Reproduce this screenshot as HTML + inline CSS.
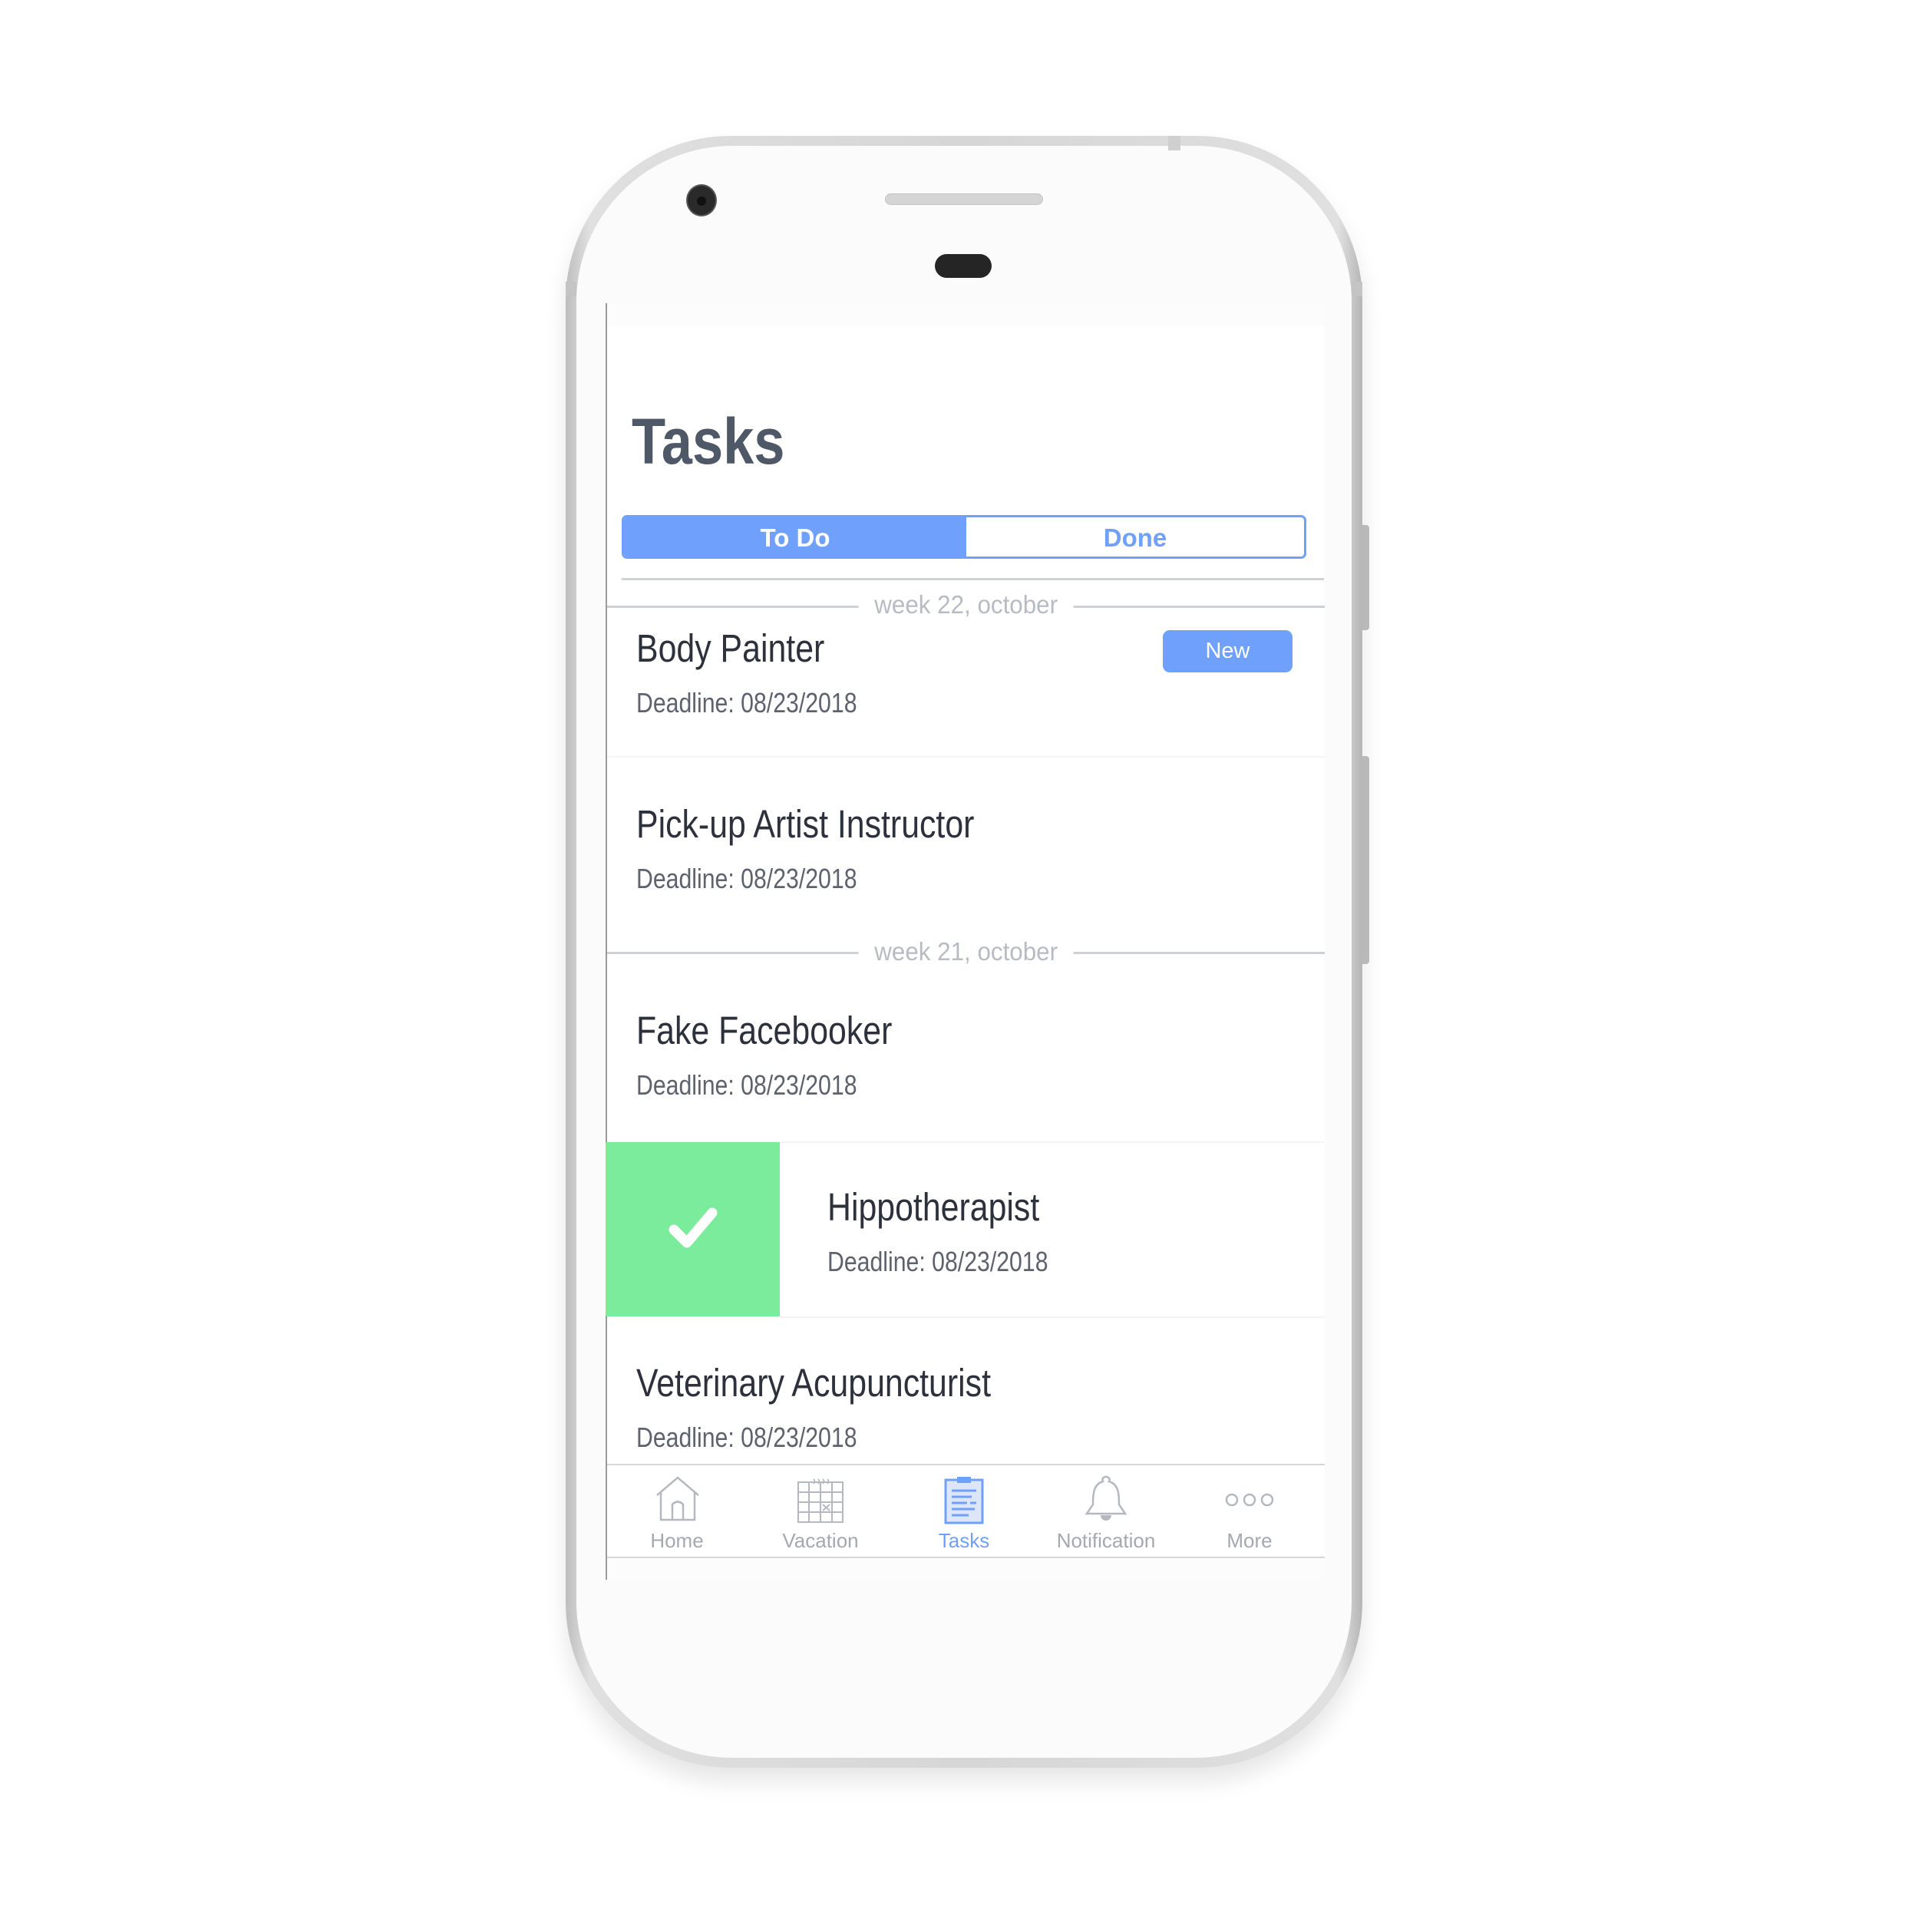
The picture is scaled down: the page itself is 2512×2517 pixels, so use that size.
<!DOCTYPE html>
<html><head><meta charset="utf-8">
<style>
html,body{margin:0;padding:0;background:#fff;}
body{width:2512px;height:2517px;position:relative;overflow:hidden;font-family:"Liberation Sans",sans-serif;}
.abs{position:absolute;}
.phone{left:737px;top:177px;width:1038px;height:2126px;border-radius:215px;background:linear-gradient(90deg,#bdbdbd,#e0e0e0 3%,#d6d6d6 50%,#e0e0e0 97%,#b5b5b5);box-shadow:0 18px 30px rgba(0,0,0,0.10);}
.inner{left:751px;top:190px;width:1010px;height:2100px;border-radius:203px;background:#fbfbfb;}
.screen{left:789px;top:395px;width:937px;height:1663px;background:#fff;border-left:2px solid #9a9a9a;box-sizing:border-box;}
.t{color:#2c313c;font-size:51px;transform:scaleX(0.84);transform-origin:0 0;white-space:nowrap;}
.d{color:#5d626d;font-size:36px;transform:scaleX(0.84);transform-origin:0 0;white-space:nowrap;}
.wk{color:#b7bbc2;font-size:33px;background:#fff;padding:0 22px;display:inline-block;transform:scaleX(0.95);}
.lbl{font-size:26px;color:#a5a8ae;width:200px;text-align:center;}
</style></head><body>
<div class="abs phone"></div>
<div class="abs inner"></div>
<div class="abs" style="left:1775px;top:684px;width:9px;height:137px;background:#b9b9b9;border-radius:0 4px 4px 0"></div>
<div class="abs" style="left:1775px;top:985px;width:9px;height:271px;background:#b9b9b9;border-radius:0 4px 4px 0"></div>
<div class="abs" style="left:1522px;top:177px;width:16px;height:19px;background:#cfcfcf"></div>
<div class="abs" style="left:737px;top:367px;width:14px;height:19px;background:#c4c4c4"></div>
<div class="abs" style="left:1761px;top:367px;width:14px;height:19px;background:#c4c4c4"></div>
<div class="abs" style="left:894px;top:240px;width:40px;height:42px;border-radius:50%;background:#2a2a2a;border:2px solid #555;box-sizing:border-box"></div>
<div class="abs" style="left:908px;top:256px;width:12px;height:12px;border-radius:50%;background:#111"></div>
<div class="abs" style="left:1153px;top:252px;width:206px;height:15px;border-radius:8px;background:#d5d5d5;border:1px solid #c2c2c2;box-sizing:border-box"></div>
<div class="abs" style="left:1218px;top:331px;width:74px;height:31px;border-radius:16px;background:#252525"></div>

<div class="abs screen"></div>
<div class="abs" style="left:791px;top:395px;width:935px;height:30px;background:#fcfcfc"></div>

<div class="abs" style="left:823px;top:533px;font-size:84px;font-weight:bold;color:#4f5866;line-height:1;transform:scaleX(0.86);transform-origin:0 0">Tasks</div>

<div class="abs" style="left:810px;top:671px;width:892px;height:57px;border:3px solid #6fa1fc;border-radius:7px;box-sizing:border-box;background:#fff;overflow:hidden">
 <div class="abs" style="left:0;top:0;width:446px;height:51px;background:#6fa1fc;color:#fff;font-size:33px;font-weight:bold;text-align:center;line-height:53px">To Do</div>
 <div class="abs" style="left:446px;top:0;width:440px;height:51px;color:#6fa1fc;font-size:33px;font-weight:bold;text-align:center;line-height:53px">Done</div>
</div>
<div class="abs" style="left:810px;top:753px;width:915px;height:3px;background:#d0d2d6"></div>

<div class="abs" style="left:791px;top:789px;width:935px;height:3px;background:#cdd0d5"></div>
<div class="abs" style="left:791px;top:768px;width:935px;text-align:center;line-height:40px"><span class="wk">week 22, october</span></div>

<div class="abs t" style="left:829px;top:815px">Body Painter</div>
<div class="abs d" style="left:829px;top:895px">Deadline: 08/23/2018</div>
<div class="abs" style="left:1515px;top:821px;width:169px;height:55px;background:#6fa1fc;border-radius:9px;color:#fff;font-size:29px;text-align:center;line-height:55px">New</div>
<div class="abs" style="left:791px;top:985px;width:935px;height:2px;background:#f4f4f4"></div>

<div class="abs t" style="left:829px;top:1044px">Pick-up Artist Instructor</div>
<div class="abs d" style="left:829px;top:1124px">Deadline: 08/23/2018</div>

<div class="abs" style="left:791px;top:1240px;width:935px;height:3px;background:#cdd0d5"></div>
<div class="abs" style="left:791px;top:1220px;width:935px;text-align:center;line-height:40px"><span class="wk">week 21, october</span></div>

<div class="abs t" style="left:829px;top:1313px">Fake Facebooker</div>
<div class="abs d" style="left:829px;top:1393px">Deadline: 08/23/2018</div>
<div class="abs" style="left:791px;top:1487px;width:935px;height:2px;background:#f4f4f4"></div>

<div class="abs" style="left:789px;top:1488px;width:227px;height:227px;background:#7beb9c"></div>
<svg class="abs" style="left:870px;top:1570px" width="66" height="60" viewBox="0 0 66 60"><path d="M8 32 L25 49 L58 10" fill="none" stroke="#fff" stroke-width="13" stroke-linecap="round" stroke-linejoin="round"/></svg>
<div class="abs t" style="left:1078px;top:1543px">Hippotherapist</div>
<div class="abs d" style="left:1078px;top:1623px">Deadline: 08/23/2018</div>
<div class="abs" style="left:1016px;top:1715px;width:710px;height:2px;background:#f4f4f4"></div>

<div class="abs t" style="left:829px;top:1772px">Veterinary Acupuncturist</div>
<div class="abs d" style="left:829px;top:1852px">Deadline: 08/23/2018</div>

<div class="abs" style="left:791px;top:1907px;width:935px;height:2px;background:#d4d6da"></div>
<div class="abs" style="left:791px;top:2028px;width:935px;height:2px;background:#d4d6da"></div>
<div class="abs" style="left:791px;top:2030px;width:935px;height:28px;background:#fcfcfc"></div>

<svg class="abs" style="left:852px;top:1922px" width="62" height="62" viewBox="0 0 62 62"><path d="M4 26 L31 3 L58 26 M9 22 V58 H53 V22 M24 58 V38 Q31 31 38 38 V58" fill="none" stroke="#b5b8be" stroke-width="2.5"/></svg>
<svg class="abs" style="left:1038px;top:1925px" width="62" height="60" viewBox="0 0 62 60"><path d="M2 6 H60 V58 H2 Z M2 19 H60 M2 32 H60 M2 45 H60 M16 6 V58 M31 6 V58 M46 6 V58 M34 35 L43 43 M43 35 L34 43" fill="none" stroke="#b5b8be" stroke-width="2"/><path d="M22 2 q3 3 0 6 M28 2 q3 3 0 6 M34 2 q3 3 0 6 M40 2 q3 3 0 6" fill="none" stroke="#b5b8be" stroke-width="1.8"/></svg>
<svg class="abs" style="left:1230px;top:1922px" width="52" height="64" viewBox="0 0 52 64"><rect x="2" y="6" width="48" height="56" fill="#dde5f8" stroke="#6fa1fc" stroke-width="3"/><rect x="17" y="2" width="18" height="8" fill="#6fa1fc"/><path d="M10 20 H42 M10 28 H36 M10 36 H30 M34 36 H42 M10 44 H40 M10 52 H32" stroke="#6fa1fc" stroke-width="3"/></svg>
<svg class="abs" style="left:1412px;top:1922px" width="58" height="64" viewBox="0 0 58 64"><path d="M29 2 a4 4 0 0 1 4 6 C46 12 46 26 46 38 L54 50 H4 L12 38 C12 26 12 12 25 8 a4 4 0 0 1 4 -6 Z" fill="none" stroke="#b5b8be" stroke-width="2.5"/><path d="M22 52 a7 7 0 0 0 14 0" fill="#b5b8be"/></svg>
<svg class="abs" style="left:1596px;top:1942px" width="64" height="24" viewBox="0 0 64 24"><circle cx="9" cy="12" r="7" fill="none" stroke="#b5b8be" stroke-width="2.5"/><circle cx="32" cy="12" r="7" fill="none" stroke="#b5b8be" stroke-width="2.5"/><circle cx="55" cy="12" r="7" fill="none" stroke="#b5b8be" stroke-width="2.5"/></svg>

<div class="abs lbl" style="left:782px;top:1992px">Home</div>
<div class="abs lbl" style="left:969px;top:1992px">Vacation</div>
<div class="abs lbl" style="left:1156px;top:1992px;color:#6fa1fc">Tasks</div>
<div class="abs lbl" style="left:1341px;top:1992px">Notification</div>
<div class="abs lbl" style="left:1528px;top:1992px">More</div>
</body></html>
